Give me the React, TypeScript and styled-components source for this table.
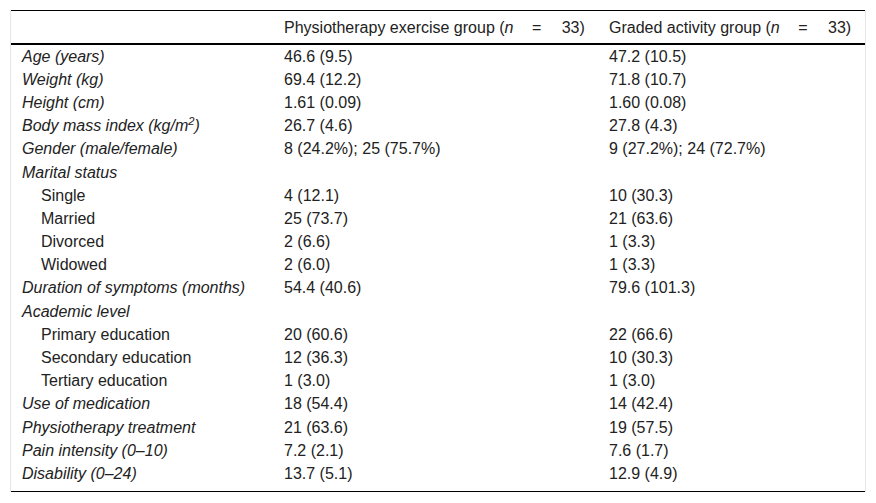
import React from "react";
import styled, { createGlobalStyle } from "styled-components";

const Global = createGlobalStyle`
  html, body { margin: 0; padding: 0; background: #fff; }
  body { font-family: "Liberation Sans", Arial, sans-serif; color: #222; }
`;

const Page = styled.div`
  padding: 10px 10px 0 10px;
  width: 856px;
`;

const Frame = styled.div`
  border-left: 1px solid #e6e6e6;
  border-right: 1px solid #e6e6e6;
`;

const Table = styled.table`
  width: 854px;
  table-layout: fixed;
  border-collapse: collapse;
  border-top: 1px solid #000;
  border-bottom: 1px solid #000;
  font-size: 16px;
  line-height: 18px;
`;

const HeadCell = styled.th`
  font-weight: normal;
  text-align: left;
  padding: 8px 8px 6px 11px;
  border-bottom: 2px solid #000;
  white-space: nowrap;
`;

const Cell = styled.td<{ $label?: boolean; $indent?: boolean; $last?: boolean }>`
  padding: 2.6px 10px ${(p) => (p.$last ? "7.8px" : "2.6px")} ${(p) => (p.$indent ? "30px" : "11px")};
  font-style: ${(p) => (p.$label && !p.$indent ? "italic" : "normal")};
  vertical-align: top;
  white-space: nowrap;
`;

const Eq = styled.span`
  padding: 0 16px 0 14px;
  font-style: normal;
`;

const Sup = styled.sup`
  font-size: 0.7em;
  line-height: 0;
  vertical-align: 0.5em;
`;

type Row = { label: React.ReactNode; a: string; b: string; indent?: boolean };

const rows: Row[] = [
  { label: "Age (years)", a: "46.6 (9.5)", b: "47.2 (10.5)" },
  { label: "Weight (kg)", a: "69.4 (12.2)", b: "71.8 (10.7)" },
  { label: "Height (cm)", a: "1.61 (0.09)", b: "1.60 (0.08)" },
  {
    label: (
      <>
        Body mass index (kg/m<Sup>2</Sup>)
      </>
    ),
    a: "26.7 (4.6)",
    b: "27.8 (4.3)",
  },
  { label: "Gender (male/female)", a: "8 (24.2%); 25 (75.7%)", b: "9 (27.2%); 24 (72.7%)" },
  { label: "Marital status", a: "", b: "" },
  { label: "Single", a: "4 (12.1)", b: "10 (30.3)", indent: true },
  { label: "Married", a: "25 (73.7)", b: "21 (63.6)", indent: true },
  { label: "Divorced", a: "2 (6.6)", b: "1 (3.3)", indent: true },
  { label: "Widowed", a: "2 (6.0)", b: "1 (3.3)", indent: true },
  { label: "Duration of symptoms (months)", a: "54.4 (40.6)", b: "79.6 (101.3)" },
  { label: "Academic level", a: "", b: "" },
  { label: "Primary education", a: "20 (60.6)", b: "22 (66.6)", indent: true },
  { label: "Secondary education", a: "12 (36.3)", b: "10 (30.3)", indent: true },
  { label: "Tertiary education", a: "1 (3.0)", b: "1 (3.0)", indent: true },
  { label: "Use of medication", a: "18 (54.4)", b: "14 (42.4)" },
  { label: "Physiotherapy treatment", a: "21 (63.6)", b: "19 (57.5)" },
  { label: "Pain intensity (0–10)", a: "7.2 (2.1)", b: "7.6 (1.7)" },
  { label: "Disability (0–24)", a: "13.7 (5.1)", b: "12.9 (4.9)" },
];

export default function App() {
  return (
    <>
      <Global />
      <Page>
        <Frame>
          <Table>
            <colgroup>
              <col style={{ width: 262 }} />
              <col style={{ width: 325 }} />
              <col style={{ width: 267 }} />
            </colgroup>
            <thead>
              <tr>
                <HeadCell />
                <HeadCell>
                  Physiotherapy exercise group (<i>n</i> <Eq>=</Eq> 33)
                </HeadCell>
                <HeadCell>
                  Graded activity group (<i>n</i> <Eq>=</Eq> 33)
                </HeadCell>
              </tr>
            </thead>
            <tbody>
              {rows.map((r, i) => {
                const last = i === rows.length - 1;
                return (
                  <tr key={i}>
                    <Cell $label $indent={r.indent} $last={last}>
                      {r.label}
                    </Cell>
                    <Cell $last={last}>{r.a}</Cell>
                    <Cell $last={last}>{r.b}</Cell>
                  </tr>
                );
              })}
            </tbody>
          </Table>
        </Frame>
      </Page>
    </>
  );
}
